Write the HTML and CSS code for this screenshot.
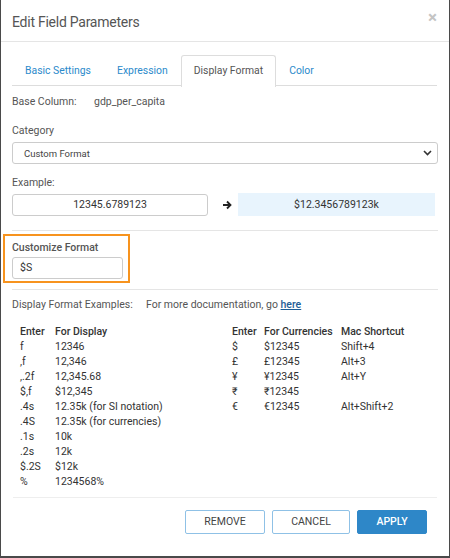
FILE: index.html
```html
<!DOCTYPE html>
<html>
<head>
<meta charset="utf-8">
<link rel="stylesheet" href="styles.css">
</head>
<body>
<div class="modal">
  <div class="header">
    <div class="title">Edit Field Parameters</div>
    <div class="close">×</div>
  </div>
  <div class="body">
    <div class="tabs">
      <div class="tab">Basic Settings</div>
      <div class="tab">Expression</div>
      <div class="tab active">Display Format</div>
      <div class="tab">Color</div>
    </div>
    <div class="base"><span class="base-label">Base Column:</span><span>gdp_per_capita</span></div>
    <div class="label">Category</div>
    <div class="select"><span>Custom Format</span>
      <svg width="9" height="6" viewBox="0 0 9 6"><path d="M1 1 L4.5 4.5 L8 1" fill="none" stroke="#333" stroke-width="1.6"/></svg>
    </div>
    <div class="label label2">Example:</div>
    <div class="example">
      <div class="ex-in">12345.6789123</div>
      <svg class="arrow" width="10" height="10" viewBox="0 0 10 10"><path d="M1 5 H8 M5 1.5 L8.5 5 L5 8.5" fill="none" stroke="#222" stroke-width="1.8"/></svg>
      <div class="ex-out">$12.3456789123k</div>
    </div>
    <div class="sep"></div>
    <div class="custom">
      <div class="custom-label">Customize Format</div>
      <div class="custom-in">$S</div>
    </div>
    <div class="sep sep2"></div>
    <div class="doc"><span class="doc-label">Display Format Examples:</span><span>For more documentation, go <a>here</a></span></div>
    <div class="tables">
      <div class="tbl left">
        <div class="th">Enter</div><div class="th">For Display</div>
        <div>f</div><div>12346</div>
        <div>,f</div><div>12,346</div>
        <div>,.2f</div><div>12,345.68</div>
        <div>$,f</div><div>$12,345</div>
        <div>.4s</div><div>12.35k (for SI notation)</div>
        <div>.4S</div><div>12.35k (for currencies)</div>
        <div>.1s</div><div>10k</div>
        <div>.2s</div><div>12k</div>
        <div>$.2S</div><div>$12k</div>
        <div>%</div><div>1234568%</div>
      </div>
      <div class="tbl right">
        <div class="th">Enter</div><div class="th">For Currencies</div><div class="th">Mac Shortcut</div>
        <div>$</div><div>$12345</div><div>Shift+4</div>
        <div>£</div><div>£12345</div><div>Alt+3</div>
        <div>¥</div><div>¥12345</div><div>Alt+Y</div>
        <div>₹</div><div>₹12345</div><div></div>
        <div>€</div><div>€12345</div><div>Alt+Shift+2</div>
      </div>
    </div>
  </div>
  <div class="footer">
    <div class="btn">REMOVE</div>
    <div class="btn">CANCEL</div>
    <div class="btn primary">APPLY</div>
  </div>
</div>
</body>
</html>
```
FILE: styles.css
```css
html, body { margin: 0; padding: 0; }
body {
  background: #4a4a4a;
  width: 450px;
  height: 558px;
  font-family: Roboto, "Liberation Sans", sans-serif;
  color: #333;
  overflow: hidden;
}
.modal {
  margin: 0 1px 0 1px;
  height: 556px;
  background: #fff;
  display: flex;
  flex-direction: column;
}
.header {
  height: 42px;
  border-bottom: 1px solid #e5e5e5;
  display: flex;
  align-items: center;
  justify-content: space-between;
  padding: 3px 11px 0 11px;
  box-sizing: border-box;
}
.title { font-size: 14px; letter-spacing: -0.25px; color: #555; }
.close { font-size: 17px; color: #c4c4c4; font-weight: bold; margin-top: -10px; margin-right: 1px; }
.body { padding: 13px 12px 0 11px; flex: 1; }
.tabs {
  display: flex;
  border-bottom: 1px solid #ddd;
  height: 31px;
  box-sizing: border-box;
}
.tab {
  font-size: 10.4px;
  color: #2b8acb;
  padding: 0 12px;
  line-height: 30px;
  border: 1px solid transparent;
  border-bottom: none;
}
.tab.active {
  color: #555;
  border-color: #ddd;
  border-radius: 3px 3px 0 0;
  background: #fff;
  height: 31px;
}
.base { font-size: 10.5px; color: #555; margin-top: 9px; display: flex; }
.base-label { width: 82px; }
.label { font-size: 10.5px; color: #555; margin-top: 16px; }
.label2 { margin-top: 12px; }
.select {
  margin-top: 5px;
  height: 22px;
  border: 1px solid #ccc;
  border-radius: 3px;
  box-sizing: border-box;
  display: flex;
  align-items: center;
  justify-content: space-between;
  padding: 0 5px 0 11px;
  font-size: 9.5px;
  color: #444;
  width: 426px;
}
.example { display: flex; align-items: center; margin-top: 4px; }
.ex-in {
  width: 196px;
  height: 22px;
  border: 1px solid #ccc;
  border-radius: 3px;
  box-sizing: border-box;
  text-align: center;
  line-height: 20px;
  font-size: 10.5px;
  color: #333;
}
.arrow { margin: 0 0 0 14px; }
.ex-out {
  margin-left: 6px;
  width: 197px;
  height: 23px;
  background: #e8f4fd;
  text-align: center;
  line-height: 23px;
  font-size: 10.5px;
  color: #333;
}
.sep { height: 1px; background: #e5e5e5; margin-top: 14px; width: 426px; }
.custom {
  margin-left: -9px;
  margin-top: 3px;
  width: 127px;
  height: 49px;
  border: 2px solid #f7931e;
  box-sizing: border-box;
  padding: 6px 0 0 7px;
}
.custom-label { font-size: 10.5px; font-weight: 500; color: #555; line-height: 12px; }
.custom-in {
  margin-top: 3px;
  width: 111px;
  height: 22px;
  border: 1px solid #ccc;
  border-radius: 3px;
  box-sizing: border-box;
  font-size: 10.5px;
  line-height: 20px;
  padding-left: 7px;
  color: #333;
}
.sep2 { margin-top: 6px; }
.doc { font-size: 10.5px; color: #555; margin-top: 8px; display: flex; }
.doc-label { width: 134px; }
.doc a { color: #1f5d96; text-decoration: underline; font-weight: 500; }
.tables { display: flex; margin-top: 13px; padding-left: 8px; }
.tbl {
  display: grid;
  font-size: 10.5px;
  color: #333;
  line-height: 15px;
  align-content: start;
}
.tbl .th { font-weight: 500; color: #333; }
.left { grid-template-columns: 35px 177px; }
.right { grid-template-columns: 32px 77px 80px; }
.footer {
  margin: 0 12px;
  border-top: 1px solid #eee;
  height: 59px;
  display: flex;
  justify-content: flex-end;
  align-items: flex-start;
  padding: 12px 10px 0 0;
  box-sizing: border-box;
  gap: 7px;
}
.btn {
  height: 24px;
  width: 80px;
  border: 1px solid #8fc1e6;
  border-radius: 2px;
  box-sizing: border-box;
  text-align: center;
  line-height: 22px;
  font-size: 10.5px;
  color: #444;
}
.btn:nth-child(2) { width: 78px; }
.btn.primary { background: #2e87c8; border-color: #2e87c8; color: #fff; width: 70px; font-weight: 500; }
```
